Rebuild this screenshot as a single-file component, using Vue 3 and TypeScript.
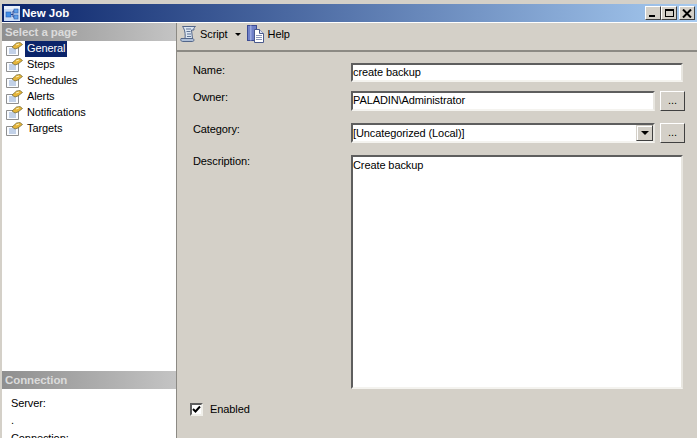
<script setup lang="ts">
const pages: string[] = ['General', 'Steps', 'Schedules', 'Alerts', 'Notifications', 'Targets']
</script>

<template>
  <div class="win">
    <div class="title">
      <svg class="appicon" width="16" height="15" viewBox="0 0 16 15">
        <rect x="0" y="0" width="16" height="15" fill="#c9daf4" />
        <rect x="0" y="0" width="16" height="3" fill="#e9f0fb" />
        <rect x="2" y="6" width="5" height="5" fill="#3f8ee8" stroke="#2a5cb0" stroke-width="0.6" />
        <rect x="10" y="3" width="4" height="4" fill="#5f9ee8" stroke="#2a5cb0" stroke-width="0.6" />
        <rect x="10" y="9" width="4" height="4" fill="#5f9ee8" stroke="#2a5cb0" stroke-width="0.6" />
        <path d="M7 8.5H9M9 5V11H10M9 5H10" stroke="#24408f" fill="none" />
      </svg>
      <span class="title-text">New Job</span>
      <div class="caps">
        <div class="cap"><span class="min"></span></div>
        <div class="cap"><span class="max"></span></div>
        <div class="cap closecap">
          <svg width="10" height="9" viewBox="0 0 10 9"><path d="M1 0.5L9 8.5M9 0.5L1 8.5" stroke="#000" stroke-width="2" /></svg>
        </div>
      </div>
    </div>
    <div class="body">
      <aside class="side">
        <div class="sechead">Select a page</div>
        <ul class="pages">
          <li v-for="(p, i) in pages" :key="p" class="page">
            <svg width="17" height="14" viewBox="0 0 17 14">
              <path d="M0.5 4.5H12.5V13.5H0.5Z" fill="#fafcff" stroke="#8f8f8f" />
              <path d="M3 7H10M3 9H10M3 11H10" stroke="#8aa6d0" />
              <path d="M6 5L10.5 1L14 0.5L16.5 2.5L12 6L9 7Z" fill="#e6b53a" stroke="#6f6430" stroke-width="0.7" />
              <path d="M10 3L13 2" stroke="#fff0b0" />
            </svg>
            <span class="pagename" :class="{ sel: i === 0 }">{{ p }}</span>
          </li>
        </ul>
        <div class="sechead">Connection</div>
        <div class="conn">
          <div>Server:</div>
          <div class="connval">.</div>
          <div class="connlast">Connection:</div>
        </div>
      </aside>
      <main class="main">
        <div class="toolbar">
          <svg width="17" height="18" viewBox="0 0 17 18">
            <path d="M2.5 1.5H15.5C14 2.5 13.5 3.5 14 5H11.5L12.5 13.5H5C5.5 10.5 5 6 4 4C3.5 3 3 2 2.5 1.5Z" fill="#dce6f2" stroke="#53668a" />
            <path d="M1 13.5H13C14.5 14.5 14 16.5 12.5 16.5H2.5C1 16.5 0.3 14.5 1 13.5Z" fill="#aebfd8" stroke="#53668a" />
            <path d="M6 4H11M6.5 6.5H10.5M7 9H11M7 11.5H11" stroke="#5f7396" />
          </svg>
          <span class="tb-label">Script</span>
          <span class="arrow"></span>
          <svg class="helpicon" width="17" height="18" viewBox="0 0 17 18">
            <rect x="0.5" y="0.5" width="9" height="15" fill="#6f80c8" stroke="#3c4c94" />
            <rect x="3" y="0.5" width="1.5" height="15" fill="#9aa8e0" />
            <path d="M7.5 4.5H12.5L16.5 8.5V17.5H7.5Z" fill="#fff" stroke="#4a5a8c" />
            <path d="M12.5 4.5V8.5H16.5" fill="#dfe5f5" stroke="#4a5a8c" />
            <path d="M9 10.5H15M9 12.5H15M9 14.5H15" stroke="#8b96b8" />
          </svg>
          <span class="tb-label help-label">Help</span>
        </div>
        <div class="form">
          <div class="row name-row">
            <label>Name:</label>
            <div class="field">create backup</div>
          </div>
          <div class="row owner-row">
            <label>Owner:</label>
            <div class="field short">PALADIN\Administrator</div>
            <div class="dots">...</div>
          </div>
          <div class="row cat-row">
            <label>Category:</label>
            <div class="field short combo">
              <span>[Uncategorized (Local)]</span>
              <span class="dropbtn"><span class="droparrow"></span></span>
            </div>
            <div class="dots">...</div>
          </div>
          <div class="row desc-row">
            <label>Description:</label>
            <div class="field area">Create backup</div>
          </div>
          <div class="enabled">
            <span class="check">
              <svg width="9" height="9" viewBox="0 0 9 9"><path d="M1 4L3.5 6.5L8 1.5" fill="none" stroke="#000" stroke-width="2" /></svg>
            </span>
            <span>Enabled</span>
          </div>
        </div>
      </main>
    </div>
  </div>
</template>

<style>
html, body { margin: 0; padding: 0; overflow: hidden; }
</style>

<style scoped>
.win {
  width: 697px;
  height: 438px;
  overflow: hidden;
  background: #d4d0c8;
  padding-top: 4px;
  box-sizing: border-box;
  font-family: "Liberation Sans", Arial, sans-serif;
  font-size: 11px;
  letter-spacing: -0.1px;
  color: #000;
  display: flex;
  flex-direction: column;
}
.title {
  height: 18px;
  flex: none;
  display: flex;
  align-items: center;
  margin-left: 2px;
  padding: 0 2px 0 2px;
  background: linear-gradient(90deg, #0a246a, #a6caf0);
  box-shadow: 0 1px 0 #fff;
}
.appicon { flex: none; }
.title-text { margin-left: 2px; color: #fff; font-weight: 700; font-size: 11.5px; letter-spacing: 0; }
.caps { margin-left: auto; display: flex; }
.cap {
  width: 16px;
  height: 14px;
  box-sizing: border-box;
  background: #d4d0c8;
  border: 1px solid;
  border-color: #fff #404040 #404040 #fff;
  display: flex;
  align-items: center;
  justify-content: center;
}
.closecap { margin-left: 2px; }
.min { width: 6px; height: 2px; background: #000; align-self: flex-end; margin-bottom: 2px; margin-right: 2px; }
.max { width: 9px; height: 8px; border: 1px solid #000; border-top-width: 2px; box-sizing: border-box; }
.body { flex: 1; display: flex; min-height: 0; margin-top: 1px; }
.side {
  width: 174px;
  flex: none;
  margin-left: 2px;
  background: #fff;
  display: flex;
  flex-direction: column;
}
.sechead {
  height: 18px;
  flex: none;
  padding-left: 3px;
  line-height: 18px;
  font-weight: 700;
  font-size: 11.5px;
  color: #dbdbdb;
  background: linear-gradient(90deg, #8f8f8f, #c4c4c4);
}
.pages { list-style: none; margin: 0; padding: 0; height: 330px; flex: none; }
.page { height: 16px; display: flex; align-items: center; padding-left: 4px; }
.pagename { margin-left: 2px; padding: 0 2px 2px; line-height: 14px; }
.pagename.sel { background: #0a246a; color: #fff; }
.conn { padding: 7px 0 0 9px; line-height: 15px; }
.connval { margin-top: 2px; height: 18px; }
.main { flex: 1; min-width: 0; border-left: 1px solid #8c8a84; }
.toolbar {
  height: 27px;
  box-sizing: content-box;
  border-bottom: 2px solid #8c8a84;
  display: flex;
  align-items: flex-start;
  padding-left: 3px;
}
.toolbar svg { margin-top: 2px; }
.tb-label { margin-left: 3px; margin-top: 4px; line-height: 14px; }
.help-label { margin-left: 4px; }
.arrow {
  width: 0;
  height: 0;
  margin-left: 7px;
  margin-top: 10px;
  border: 3px solid transparent;
  border-top-color: #000;
  border-bottom-width: 0;
}
.helpicon { margin-left: 6px; }
.form { padding: 11px 12px 0 16px; display: flex; flex-direction: column; }
.row { display: flex; align-items: flex-start; }
.row label { width: 158px; flex: none; line-height: 14px; }
.owner-row label, .cat-row label, .desc-row label { margin-top: -1px; }
.field {
  width: 332px;
  height: 19px;
  box-sizing: border-box;
  background: #fff;
  border: 2px solid;
  border-color: #5e5e5e #e8e6e0 #f4f3ef #5e5e5e;
  line-height: 15px;
  white-space: nowrap;
}
.short { width: 304px; height: 20px; }
.owner-row { margin-top: 9px; }
.cat-row { margin-top: 12px; }
.desc-row { margin-top: 12px; }
.area { height: 234px; padding-top: 1px; }
.dots {
  width: 25px;
  height: 20px;
  margin-left: 5px;
  box-sizing: border-box;
  background: #d4d0c8;
  border: 1px solid;
  border-color: #fff #404040 #404040 #fff;
  text-align: center;
  line-height: 17px;
}
.combo { display: flex; align-items: center; justify-content: space-between; }
.dropbtn {
  width: 17px;
  height: 16px;
  box-sizing: border-box;
  background: #d4d0c8;
  border: 1px solid;
  border-color: #d4d0c8 #404040 #404040 #d4d0c8;
  box-shadow: inset 1px 1px 0 #fff;
  display: flex;
  align-items: center;
  justify-content: center;
}
.droparrow {
  width: 0;
  height: 0;
  border: 4px solid transparent;
  border-top-color: #000;
  border-bottom-width: 0;
}
.enabled { display: flex; align-items: center; margin-top: 13px; margin-left: -3px; height: 14px; }
.check {
  width: 13px;
  height: 13px;
  box-sizing: border-box;
  background: #fff;
  border: 2px solid;
  border-color: #5e5e5e #f0efea #f0efea #5e5e5e;
  display: flex;
  align-items: center;
  justify-content: center;
  margin-right: 7px;
}
</style>
